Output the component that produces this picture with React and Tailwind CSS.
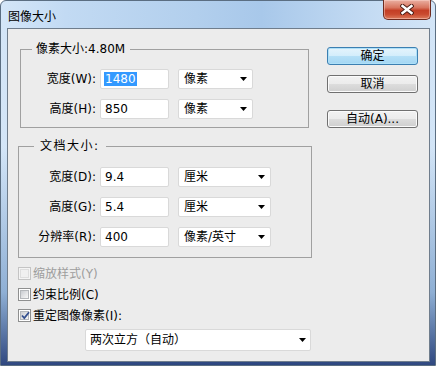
import React from "react";

function Arrow() {
  return (
    <svg width="7" height="4" viewBox="0 0 7 4" className="shrink-0">
      <path d="M0 0H7L3.5 4Z" fill="#000" />
    </svg>
  );
}

function Select({ w, text }) {
  return (
    <div
      className={`${w} h-[20px] bg-white border border-[#d9d9d9] rounded-[2px] flex items-center justify-between pl-[5px] pr-[5px] leading-[14px]`}
    >
      <span>{text}</span>
      <Arrow />
    </div>
  );
}

function Row({ lw, label, value, selected, sw, unit }) {
  return (
    <div className="flex items-center h-[20px]">
      <div className={`${lw} text-right leading-[14px] whitespace-nowrap`}>{label}</div>
      <div className="ml-[4px] w-[69px] h-[20px] bg-white border border-[#d9d9d9] rounded-[2px] flex items-center pl-[3px] leading-[14px]">
        {selected ? (
          <span className="bg-[#3399ff] text-white px-[1px]">{value}</span>
        ) : (
          <span className="px-[1px]">{value}</span>
        )}
      </div>
      <div className="ml-[9px]">
        <Select w={sw} text={unit} />
      </div>
    </div>
  );
}

function Checkbox({ checked, disabled, label }) {
  return (
    <div className="flex items-center h-[13px]">
      <div
        className={`w-[13px] h-[13px] border ${
          disabled ? "border-[#c4c4c4] bg-[#f4f4f4]" : "border-[#8e8f8f] bg-white"
        } flex items-center justify-center relative`}
      >
        <div
          className={`w-[9px] h-[9px] ${
            disabled
              ? "bg-[#f0f0f0] border border-[#dedede]"
              : "bg-[linear-gradient(135deg,#c9ccd1_0%,#e6e7e9_60%,#f7f7f7_100%)] border border-[#b4b7bb]"
          }`}
        />
        {checked && (
          <svg width="11" height="11" viewBox="0 0 11 11" className="absolute left-[1px] top-[0px]">
            <path d="M2 5.5L4.3 8L9 2.2" fill="none" stroke="#34508f" strokeWidth="1.8" />
          </svg>
        )}
      </div>
      <span className={`ml-[2px] leading-[14px] ${disabled ? "text-[#9d9d9d]" : ""}`}>{label}</span>
    </div>
  );
}

function Button({ children, primary }) {
  return (
    <div
      className={`w-[91px] h-[18px] rounded-[3px] border flex items-center justify-center leading-[14px] ${
        primary
          ? "border-[#3c7fb1] bg-[linear-gradient(180deg,#e5f4fc_0%,#d3edfb_50%,#b6e0f7_50%,#a3d6f3_100%)] shadow-[inset_0_0_0_1px_#aee0f8]"
          : "border-[#707070] bg-[linear-gradient(180deg,#f2f2f2_0%,#ebebeb_50%,#dddddd_50%,#cfcfcf_100%)] shadow-[inset_0_0_0_1px_#fbfbfb]"
      }`}
    >
      {children}
    </div>
  );
}

export default function App() {
  return (
    <div className="w-[436px] h-[366px] overflow-hidden font-['DejaVu_Sans','Noto_Sans_CJK_SC',sans-serif] text-[12px] text-black">
      <div className="w-full h-full flex flex-col rounded-t-[6px] border border-[#5b6e82] bg-[linear-gradient(180deg,rgba(0,0,0,0)_40%,rgba(60,110,170,0.45)_80%,rgba(30,55,115,0.9)_100%),linear-gradient(90deg,#d4e6f8_0%,#c2daf3_15%,#b2cfed_45%,#a8c8ea_60%,#c4dbf3_85%,#d3e5f7_100%)]">
        <div className="h-[27px] flex items-start justify-between">
          <div className="pl-[7px] pt-[8px] leading-[14px] font-['Noto_Sans_CJK_SC',sans-serif]">图像大小</div>
          <div className="-mt-[1px] mr-[4px] w-[48px] h-[20px] rounded-b-[5px] border border-t-0 border-[#6e2b1f] bg-[linear-gradient(180deg,#eab0a2_0%,#d8755f_40%,#c43f26_55%,#c94a2f_75%,#dc7b5c_100%)] shadow-[inset_0_0_0_1px_rgba(255,220,210,0.45)] flex items-center justify-center">
            <svg width="14" height="11" viewBox="0 0 14 11">
              <path d="M2.5 2L11.5 9M11.5 2L2.5 9" stroke="#4a1c14" strokeWidth="4.4" strokeLinecap="square" />
              <path d="M2.5 2L11.5 9M11.5 2L2.5 9" stroke="#ffffff" strokeWidth="2.4" strokeLinecap="square" />
            </svg>
          </div>
        </div>
        <div className="ml-[6px] w-[423px] h-[334px] border border-[#6f7d8c] bg-[#ececec] flex">
          <div className="ml-[10px] w-[294px] flex flex-col">
            <fieldset className="ml-[2px] mt-[14px] w-[289px] border border-[#a0a0a0]">
              <legend className="ml-[11px] pl-[4px] pr-[5px] leading-[12px]">像素大小:4.80M</legend>
              <div className="pt-[14px] pb-[8px] flex flex-col gap-[10px]">
                <Row lw="w-[75px]" label="宽度(W):" value="1480" selected sw="w-[75px]" unit="像素" />
                <Row lw="w-[75px]" label="高度(H):" value="850" sw="w-[75px]" unit="像素" />
              </div>
            </fieldset>
            <fieldset className="mt-[12px] w-[294px] border border-[#a0a0a0]">
              <legend className="ml-[15px] pl-[6px] pr-[6px] leading-[12px] tracking-[1.5px]">文档大小:</legend>
              <div className="pt-[15px] pb-[10px] flex flex-col gap-[10px]">
                <Row lw="w-[77px]" label="宽度(D):" value="9.4" sw="w-[93px]" unit="厘米" />
                <Row lw="w-[77px]" label="高度(G):" value="5.4" sw="w-[93px]" unit="厘米" />
                <Row lw="w-[77px]" label="分辨率(R):" value="400" sw="w-[93px]" unit="像素/英寸" />
              </div>
            </fieldset>
            <div className="mt-[9px] flex flex-col gap-[8px]">
              <Checkbox disabled label="缩放样式(Y)" />
              <Checkbox label="约束比例(C)" />
              <Checkbox checked label="重定图像像素(I):" />
            </div>
            <div className="mt-[7px] ml-[67px] w-[226px] h-[22px] bg-white border border-[#d9d9d9] rounded-[2px] flex items-center justify-between pl-[4px] pr-[4px] leading-[14px]">
              <span>两次立方（自动）</span>
              <Arrow />
            </div>
          </div>
          <div className="ml-[15px] mt-[18px] flex flex-col">
            <Button primary>确定</Button>
            <div className="mt-[10px]">
              <Button>取消</Button>
            </div>
            <div className="mt-[17px]">
              <Button>自动(A)...</Button>
            </div>
          </div>
        </div>
      </div>
    </div>
  );
}
